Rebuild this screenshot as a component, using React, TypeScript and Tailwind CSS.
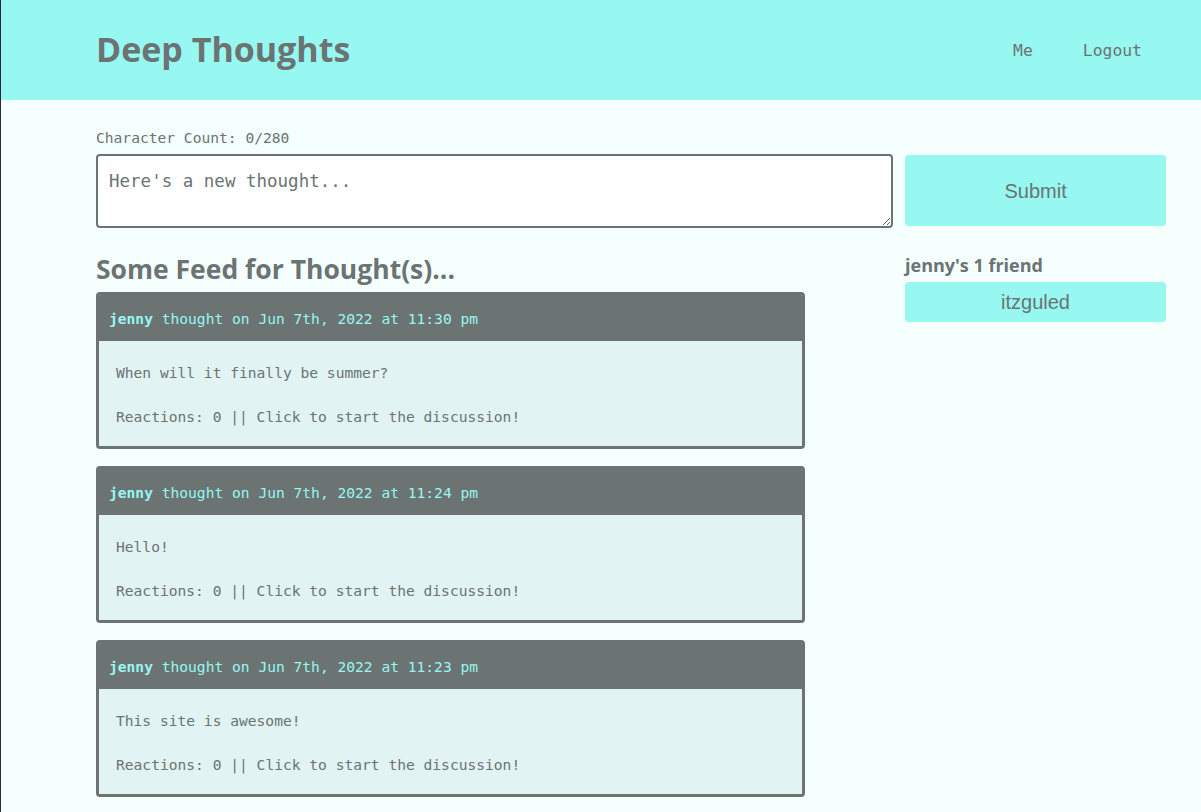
import React, { useState } from 'react';

const thoughts = [
  { id: '1', username: 'jenny', createdAt: 'Jun 7th, 2022 at 11:30 pm', text: 'When will it finally be summer?', reactions: 0 },
  { id: '2', username: 'jenny', createdAt: 'Jun 7th, 2022 at 11:24 pm', text: 'Hello!', reactions: 0 },
  { id: '3', username: 'jenny', createdAt: 'Jun 7th, 2022 at 11:23 pm', text: 'This site is awesome!', reactions: 0 },
];

const mono = "font-['DejaVu_Sans_Mono','Liberation_Mono',monospace]";
const heading = "font-['Open_Sans','Lato',sans-serif]";

const App: React.FC = () => {
  const [text, setText] = useState('');

  return (
    <div className="min-h-screen bg-[#f5fffe] border-l border-[#2b2838] text-[#6b7373]">
      <header className="h-[100px] bg-[#97f7f1] flex items-center">
        <div className="w-[1070px] ml-[95px] flex items-center justify-between">
          <h1 className={`${heading} text-[34px] font-bold -mt-[2px]`}>Deep Thoughts</h1>
          <nav className={`${mono} text-[16.4px] flex gap-[50px] pr-[24px] pt-[2px]`}>
            <a href="#">Me</a>
            <a href="#">Logout</a>
          </nav>
        </div>
      </header>

      <main className="w-[1070px] ml-[95px] pt-[29px]">
        <p className={`${mono} text-[14.6px] leading-[18px]`}>Character Count: {text.length}/280</p>
        <form className="flex gap-[12px] mt-[7px]" onSubmit={(e) => e.preventDefault()}>
          <textarea
            value={text}
            onChange={(e) => setText(e.target.value)}
            placeholder="Here's a new thought..."
            className={`${mono} w-[798px] h-[74px] bg-white border-2 border-[#6b7373] rounded-[4px] px-[11px] py-[14px] text-[17.5px] leading-[22px] placeholder:text-[#6b7373]`}
          />
          <button
            type="submit"
            className="w-[261px] h-[71px] mt-[1px] bg-[#97f7f1] rounded-[4px] text-[20px] font-['Liberation_Sans',Arial,sans-serif]"
          >
            Submit
          </button>
        </form>

        <div className="flex mt-[28px]">
          <div className="w-[709px]">
            <h2 className={`${heading} text-[26.5px] font-bold leading-[34px] -mt-[4px]`}>Some Feed for Thought(s)...</h2>
            <div className="mt-[6px] flex flex-col gap-[17px]">
              {thoughts.map((t) => (
                <div key={t.id} className={`${mono} border-[3px] border-[#6b7373] rounded-[4px] overflow-hidden`}>
                  <div className="bg-[#6b7373] text-[#97f7f1] text-[14.6px] h-[46px] flex items-center px-[10px] pt-[2px]">
                    <span className="font-bold">{t.username}</span>&nbsp;thought on {t.createdAt}
                  </div>
                  <div className="bg-[#e1f4f3] px-[17px] pt-[21px] pb-[18px] text-[14.6px] leading-[22px]">
                    <p>{t.text}</p>
                    <p className="mt-[22px]">Reactions: {t.reactions} || Click to start the discussion!</p>
                  </div>
                </div>
              ))}
            </div>
          </div>

          <div className="ml-[100px] w-[261px]">
            <h5 className={`${heading} text-[18px] font-bold leading-[22px] -mt-[2px]`}>jenny's 1 friend</h5>
            <button className="mt-[6px] w-full h-[40px] bg-[#97f7f1] rounded-[4px] text-[20px] font-['Liberation_Sans',Arial,sans-serif]">
              itzguled
            </button>
          </div>
        </div>
      </main>
    </div>
  );
};

export default App;
